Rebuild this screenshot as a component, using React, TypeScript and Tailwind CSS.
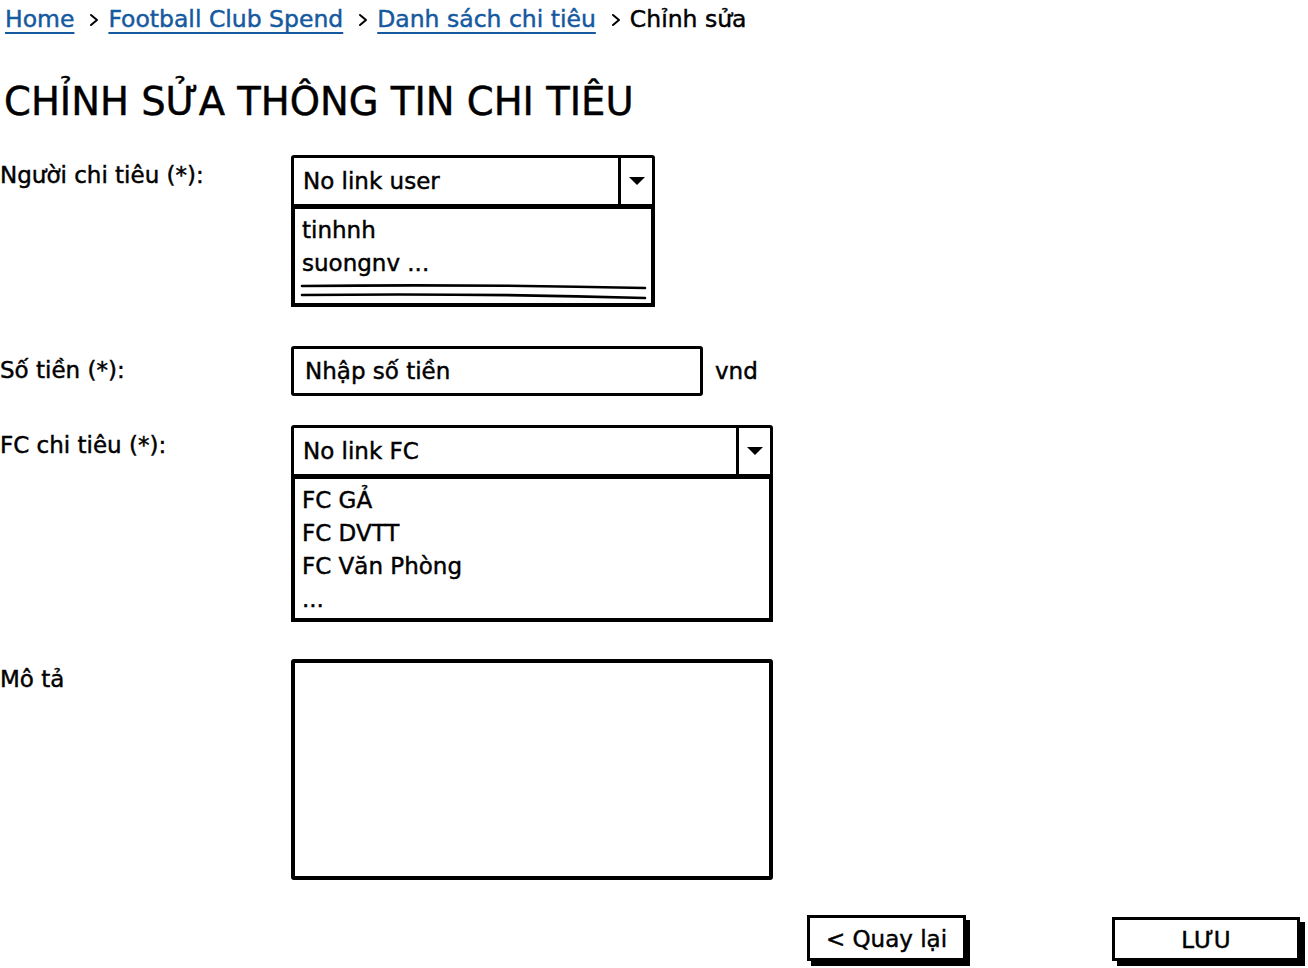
import React from "react";

const FONT = "font-['DejaVu_Sans','Noto_Sans',sans-serif] [-webkit-text-stroke:0.45px_currentColor]";

const CRUMBS = ["Home", "Football Club Spend", "Danh sách chi tiêu"];

function Chevron() {
  return (
    <svg width="10" height="14" viewBox="0 0 10 14" className="ml-[15px] mr-[9px]" aria-hidden>
      <path d="M2 2 L8 7 L2 12" fill="none" stroke="#000" strokeWidth="2" strokeLinecap="round" strokeLinejoin="round" />
    </svg>
  );
}

function Arrow() {
  return (
    <svg width="18" height="10" viewBox="0 0 18 10" aria-hidden>
      <path d="M1 1 L17 1 L9 9 Z" fill="#000" />
    </svg>
  );
}

function Label({ children, top = "pt-[6px]" }: { children: React.ReactNode; top?: string }) {
  return <div className={`w-[291px] shrink-0 text-[23px] leading-[28px] ${top}`}>{children}</div>;
}

function Dropdown({
  value,
  items,
  width,
  listHeight,
  scroll,
}: {
  value: string;
  items: string[];
  width: string;
  listHeight: string;
  scroll?: boolean;
}) {
  return (
    <div className={width}>
      <div className="relative z-10 flex h-[52px] rounded-[3px] border-[3px] border-black bg-white">
        <div className="flex flex-1 items-center pl-[9px] text-[23px]">{value}</div>
        <div className="flex w-[34px] items-center justify-center border-l-[3px] border-black">
          <Arrow />
        </div>
      </div>
      <div className={`-mt-[3px] border-[4px] border-t-[5px] border-black bg-white pl-[7px] pt-[5px] ${listHeight}`}>
        {items.map((it) => (
          <div key={it} className="text-[23px] leading-[33px]">
            {it}
          </div>
        ))}
        {scroll && (
          <svg width="350" height="18" viewBox="0 0 350 18" className="mt-[2px] -ml-[2px]" aria-hidden>
            <path d="M2 4 Q170 2 345 6" fill="none" stroke="#000" strokeWidth="2.6" strokeLinecap="round" />
            <path d="M2 13 Q170 11 345 16" fill="none" stroke="#000" strokeWidth="2.6" strokeLinecap="round" />
          </svg>
        )}
      </div>
    </div>
  );
}

export default function App() {
  return (
    <div className={`${FONT} min-h-[968px] w-[1308px] bg-white text-black`}>
      <nav className="flex h-[40px] items-center pl-[5px] text-[23.5px]">
        {CRUMBS.map((c) => (
          <React.Fragment key={c}>
            <a href="#" className="text-[#15599f] underline decoration-2 underline-offset-[5px]">
              {c}
            </a>
            <Chevron />
          </React.Fragment>
        ))}
        <span>Chỉnh sửa</span>
      </nav>

      <h1 className="mt-[38px] pl-[4px] text-[38.5px] leading-[48px] font-normal">CHỈNH SỬA THÔNG TIN CHI TIÊU</h1>

      <div className="mt-[29px] flex">
        <Label>Người chi tiêu (*):</Label>
        <Dropdown value="No link user" items={["tinhnh", "suongnv ..."]} width="w-[364px]" listHeight="h-[103px]" scroll />
      </div>

      <div className="mt-[39px] flex">
        <Label top="pt-[10px]">Số tiền (*):</Label>
        <div className="flex h-[50px] w-[412px] items-center rounded-[3px] border-[3px] border-black pl-[11px] text-[23px]">
          Nhập số tiền
        </div>
        <div className="ml-[12px] pt-[11px] text-[23px] leading-[28px]">vnd</div>
      </div>

      <div className="mt-[29px] flex">
        <Label>FC chi tiêu (*):</Label>
        <Dropdown
          value="No link FC"
          items={["FC GẢ", "FC DVTT", "FC Văn Phòng", "..."]}
          width="w-[482px]"
          listHeight="h-[148px]"
        />
      </div>

      <div className="mt-[37px] flex">
        <Label>Mô tả</Label>
        <div className="h-[221px] w-[482px] rounded-[3px] border-[4px] border-black" />
      </div>

      <div className="mt-[35px] flex items-start pl-[807px]">
        <button className="flex h-[46px] w-[159px] items-center justify-center border-[3px] border-black bg-white pt-[3px] text-[23px] shadow-[4px_5px_0_0_#000]">
          &lt; Quay lại
        </button>
        <button className="ml-[146px] mt-[2px] flex h-[44px] w-[188px] items-center justify-center border-[3px] border-black bg-white pt-[2px] text-[23px] shadow-[5px_5px_0_0_#000]">
          LƯU
        </button>
      </div>
    </div>
  );
}
